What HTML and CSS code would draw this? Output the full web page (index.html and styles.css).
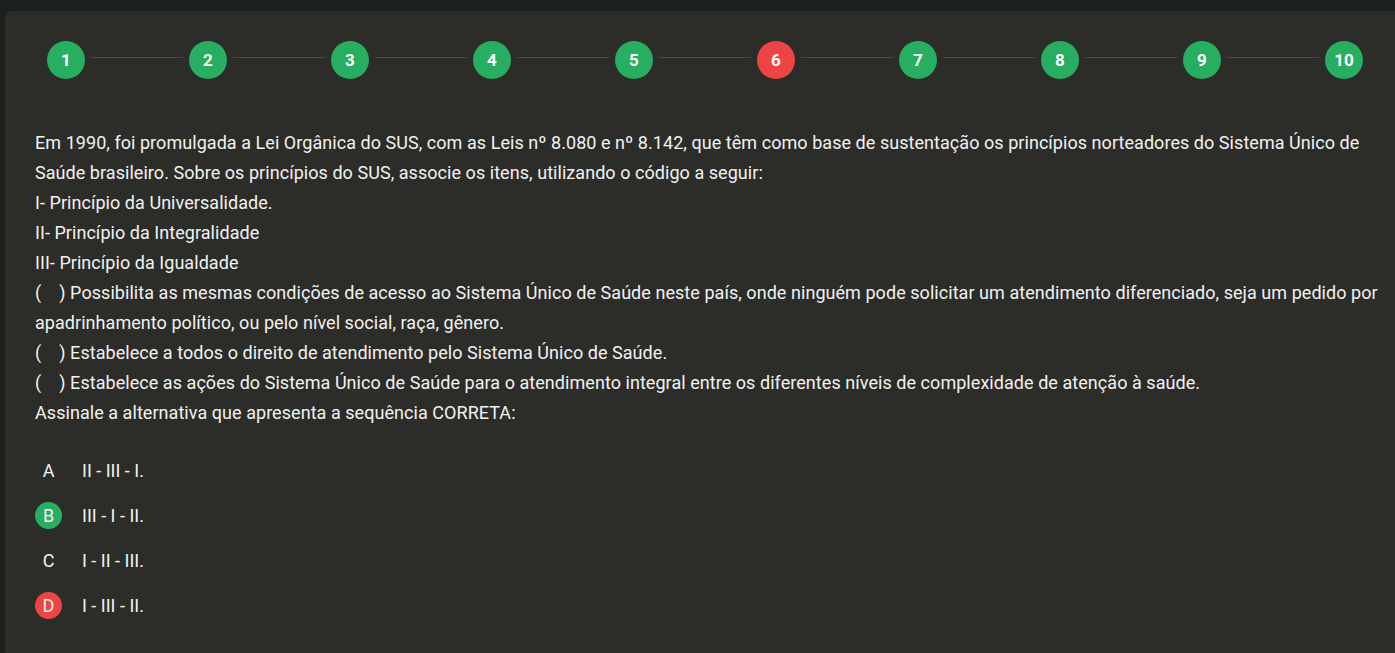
FILE: index.html
```html
<!DOCTYPE html>
<html>

<head>
    <meta charset="utf-8">
    <meta name="viewport" content="width=device-width, initial-scale=1">
    <title>Questão 6</title>
    <link rel="stylesheet" href="styles.css">
</head>

<body>
    <div class="card">
        <div class="steps">
            <span class="step">1</span><span class="step-line"></span>
            <span class="step">2</span><span class="step-line"></span>
            <span class="step">3</span><span class="step-line"></span>
            <span class="step">4</span><span class="step-line"></span>
            <span class="step">5</span><span class="step-line"></span>
            <span class="step wrong">6</span><span class="step-line"></span>
            <span class="step">7</span><span class="step-line"></span>
            <span class="step">8</span><span class="step-line"></span>
            <span class="step">9</span><span class="step-line"></span>
            <span class="step">10</span>
        </div>

        <div class="question">
            <p>Em 1990, foi promulgada a Lei Orgânica do SUS, com as Leis nº 8.080 e nº 8.142, que têm como base de sustentação os princípios norteadores do Sistema Único de Saúde brasileiro. Sobre os princípios do SUS, associe os itens, utilizando o código a seguir:</p>
            <p>I- Princípio da Universalidade.</p>
            <p>II- Princípio da Integralidade</p>
            <p>III- Princípio da Igualdade</p>
            <p>(&nbsp;&nbsp;&nbsp;&nbsp;) Possibilita as mesmas condições de acesso ao Sistema Único de Saúde neste país, onde ninguém pode solicitar um atendimento diferenciado, seja um pedido por apadrinhamento político, ou pelo nível social, raça, gênero.</p>
            <p>(&nbsp;&nbsp;&nbsp;&nbsp;) Estabelece a todos o direito de atendimento pelo Sistema Único de Saúde.</p>
            <p>(&nbsp;&nbsp;&nbsp;&nbsp;) Estabelece as ações do Sistema Único de Saúde para o atendimento integral entre os diferentes níveis de complexidade de atenção à saúde.</p>
            <p>Assinale a alternativa que apresenta a sequência CORRETA:</p>
        </div>

        <ul class="options">
            <li class="option"><span class="letter">A</span><span class="answer">II - III - I.</span></li>
            <li class="option"><span class="letter correct">B</span><span class="answer">III - I - II.</span></li>
            <li class="option"><span class="letter">C</span><span class="answer">I - II - III.</span></li>
            <li class="option"><span class="letter wrong">D</span><span class="answer">I - III - II.</span></li>
        </ul>
    </div>
</body>

</html>
```

FILE: styles.css
```css
html, body {
    margin: 0;
    height: 100%;
}

body {
    background-color: #1c201f;
    font: 18px/30px Roboto, "Liberation Sans", sans-serif;
    color: #f2f2f2;
    overflow: hidden;
}

.card {
    margin: 11px 0 0 5px;
    padding: 30px 10px 40px 30px;
    min-height: 100%;
    box-sizing: border-box;
    background-color: #2c2c28;
    border-radius: 6px 0 0 0;
}

/* stepper */

.steps {
    display: flex;
    align-items: center;
    margin: 0 22px 0 12px;
}

.step {
    flex: none;
    width: 38px;
    height: 38px;
    border-radius: 50%;
    background-color: #27ae60;
    color: #fff;
    font-size: 17px;
    font-weight: bold;
    line-height: 38px;
    text-align: center;
}

.step.wrong {
    background-color: #ef4444;
}

.step-line {
    flex: 1;
    height: 1px;
    margin: -6px 6px 0 6px;
    background-color: #4b4b46;
}

/* question text */

.question {
    margin-top: 49px;
    letter-spacing: 0.05px;
}

.question p {
    margin: 0;
}

/* alternatives */

.options {
    list-style: none;
    margin: 20px 0 0 0;
    padding: 0;
}

.option {
    display: flex;
    align-items: center;
    height: 45px;
}

.letter {
    width: 27px;
    height: 27px;
    border-radius: 50%;
    line-height: 27px;
    text-align: center;
    margin-right: 20px;
}

.letter.correct {
    background-color: #27ae60;
}

.letter.wrong {
    background-color: #ef4444;
}
```
